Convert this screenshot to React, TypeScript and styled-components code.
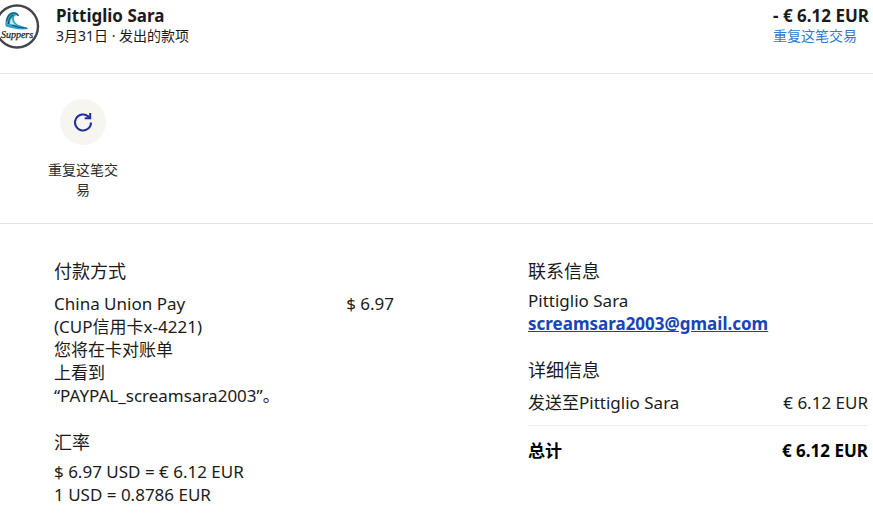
import React from "react";
import styled, { createGlobalStyle } from "styled-components";

const GlobalStyle = createGlobalStyle`
  *, *::before, *::after { box-sizing: border-box; }
  body {
    margin: 0;
    background: #fff;
    color: #1b1b1b;
    font-family: "Noto Sans", "Noto Sans CJK SC", sans-serif;
    font-size: 17px;
    line-height: 23px;
    overflow-x: hidden;
  }
  h1, h2, p, dl, dt, dd { margin: 0; font: inherit; }
`;

const Header = styled.header`
  display: flex;
  align-items: flex-start;
  padding: 4px 4px 23px 0;
  border-bottom: 1px solid #e6e6e6;
`;

const Avatar = styled.svg`
  display: block;
  flex: none;
  width: 40px;
  height: 46px;
`;

const HeaderText = styled.div`
  display: flex;
  flex-direction: column;
  align-items: flex-start;
  padding-top: 2px;
`;

const Payee = styled(HeaderText)`
  flex: 1;
  padding-left: 16px;
`;

const Strong = styled.p`
  && { font-size: 17px; font-weight: 700; line-height: 20px; white-space: nowrap; }
`;

const Meta = styled.p`
  && { font-size: 14px; line-height: 20px; }
`;

const RepeatLink = styled.a`
  color: #2f7bd0;
  font-size: 14px;
  line-height: 20px;
  text-decoration: none;
`;

const Actions = styled.section`
  padding: 25px 47px 23px;
  border-bottom: 1px solid #e6e6e6;
`;

const ActionButton = styled.button`
  display: flex;
  flex-direction: column;
  align-items: center;
  gap: 15px;
  width: 72px;
  padding: 0;
  border: 0;
  background: none;
  color: #2c2c2c;
  font: inherit;
  font-size: 14px;
  line-height: 20px;
  cursor: pointer;
`;

const IconDisc = styled.span`
  display: grid;
  place-items: center;
  width: 46px;
  height: 46px;
  border-radius: 50%;
  background: #f7f5f0;
`;

const Details = styled.main`
  display: grid;
  grid-template-columns: 1fr 1fr;
  column-gap: 134px;
  padding: 36px 5px 20px 54px;
`;

const Column = styled.div`
  display: flex;
  flex-direction: column;
  gap: 24px;
`;

const Section = styled.section<{ $gap: number }>`
  display: flex;
  flex-direction: column;
  gap: ${(p) => p.$gap}px;
`;

const Heading = styled.h2`
  && { font-size: 18px; }
`;

const Row = styled.div`
  display: flex;
  justify-content: space-between;
  gap: 16px;
`;

const Amount = styled.dd`
  white-space: nowrap;
`;

const TotalRow = styled(Row)`
  margin-top: 11px;
  padding-top: 13px;
  border-top: 1px solid #efefef;
  color: #000;
  font-weight: 700;
`;

const EmailLink = styled.a`
  color: #1a43b8;
  font-weight: 700;
`;

export default function App() {
  return (
    <>
      <GlobalStyle />
      <Header>
        <Avatar viewBox="5 0 40 46" role="img" aria-label="Suppers">
          <circle cx="22" cy="22.5" r="21" fill="#fff" stroke="#45454b" strokeWidth="2.4" />
          <path d="M10.500 22C10 15 12 9 18 8c3-.3 5.500 1.500 5.500 4-2-1-4-.5-4.500 1.500-.6 4.500 3 7.500 8 8.500l7 3c-8 1-17 0-24-3Z" fill="#2fa3c9" />
          <path d="M11.500 17c1-5 4-8 7.500-8 2.500 0 4 1.500 4.500 3M13.500 20c0-5 1-7 4.500-9M17 21c4 2 9 3 15 3" fill="none" stroke="#28505f" strokeWidth="1.200" />
          <path d="M15 20c0-3 .5-5 2-6 0 4 2 6 4 7Z" fill="#c9eaf3" />
          <text x="22" y="34" textAnchor="middle" fontFamily="Liberation Serif, serif" fontStyle="italic" fontSize="10" fill="#222" stroke="#222" strokeWidth=".25">Suppers</text>
        </Avatar>
        <Payee>
          <Strong as="h1">Pittiglio Sara</Strong>
          <Meta>3月31日 · 发出的款项</Meta>
        </Payee>
        <HeaderText>
          <Strong>- € 6.12 EUR</Strong>
          <RepeatLink href="#repeat">重复这笔交易</RepeatLink>
        </HeaderText>
      </Header>
      <Actions>
        <ActionButton type="button">
          <IconDisc>
            <svg width="22" height="22" viewBox="0 0 22 22" fill="none" stroke="#1f2f9c" strokeWidth="2" aria-hidden="true">
              <path d="M19 11.500a8 8 0 1 1-2.500-5.800" />
              <path d="M18.200 2v5.200h-5.500" />
              <path d="M15.500 5l2.500 2" />
            </svg>
          </IconDisc>
          <span>重复这笔交易</span>
        </ActionButton>
      </Actions>
      <Details>
        <Column>
          <Section $gap={9}>
            <Heading>付款方式</Heading>
            <Row as="dl">
              <dt>
                China Union Pay
                <br />
                (CUP信用卡x-4221)
                <br />
                您将在卡对账单
                <br />
                上看到
                <br />
                “PAYPAL_screamsara2003”。
              </dt>
              <Amount>$ 6.97</Amount>
            </Row>
          </Section>
          <Section $gap={6}>
            <Heading>汇率</Heading>
            <p>
              $ 6.97 USD = € 6.12 EUR
              <br />1 USD = 0.8786 EUR
            </p>
          </Section>
        </Column>
        <Column>
          <Section $gap={6}>
            <Heading>联系信息</Heading>
            <p>
              Pittiglio Sara
              <br />
              <EmailLink href="mailto:screamsara2003@gmail.com">screamsara2003@gmail.com</EmailLink>
            </p>
          </Section>
          <Section $gap={9}>
            <Heading>详细信息</Heading>
            <dl>
              <Row>
                <dt>发送至Pittiglio Sara</dt>
                <Amount>€ 6.12 EUR</Amount>
              </Row>
              <TotalRow>
                <dt>总计</dt>
                <Amount>€ 6.12 EUR</Amount>
              </TotalRow>
            </dl>
          </Section>
        </Column>
      </Details>
    </>
  );
}
